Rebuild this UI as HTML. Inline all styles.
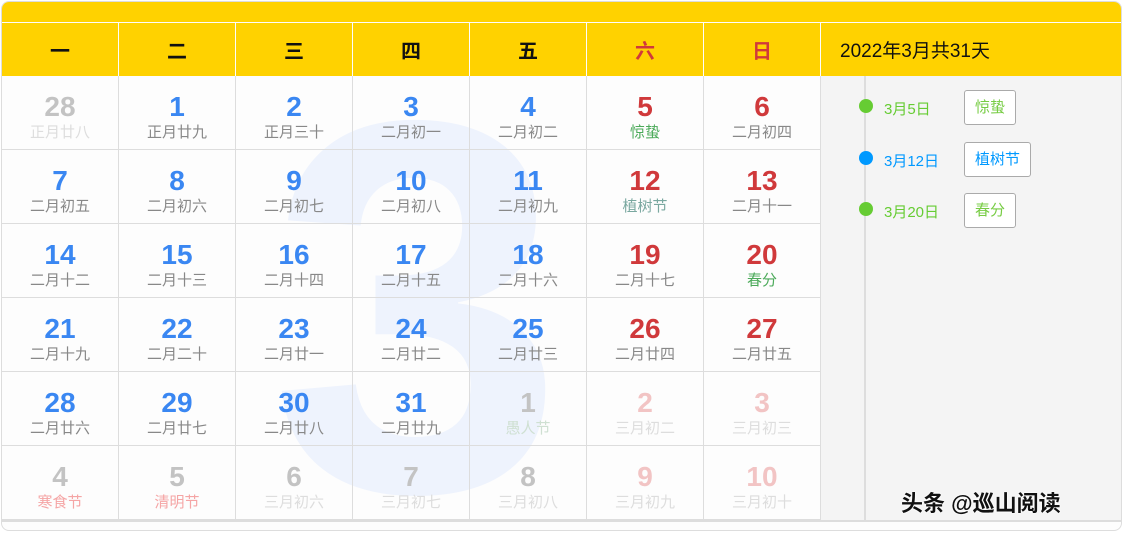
<!DOCTYPE html><html><head><meta charset="utf-8"><style>
*{margin:0;padding:0;box-sizing:border-box}
html,body{width:1123px;height:533px;overflow:hidden}
body{background:#fff;font-family:"Liberation Sans","Noto Sans CJK SC",sans-serif;position:relative}
.box{position:absolute;left:1px;top:1px;width:1121px;height:530px;border:1px solid #ddd;border-radius:8px;overflow:hidden;background:#fdfdfd}
.top{position:absolute;left:0;top:0;width:100%;height:20px;background:#ffd200}
.hd{position:absolute;top:21px;height:53px;background:#ffd200;font-size:20px;font-weight:bold;display:flex;align-items:center;justify-content:center;color:#111}
.cell{position:absolute;width:117px;height:74px;border-right:1px solid #ddd;border-bottom:1px solid #ddd;text-align:center;background:transparent}
.n{position:absolute;top:15px;left:0;width:100%;font-size:28px;font-weight:bold;line-height:32px}
.l{position:absolute;top:48px;left:0;width:100%;font-size:15px;line-height:18px;color:#888}
.b{color:#3a87f2}.r{color:#d0393b}.g{color:#c3c3c3}.p{color:#f2c4c4}
.fl{color:#ddd}
.side{position:absolute;left:819px;top:74px;width:301px;height:445px;background:#f4f4f4}
.item{position:absolute;left:63px;font-size:15px}
.dot{position:absolute;left:38px;width:14px;height:14px;border-radius:50%}
.tag{position:absolute;left:143px;height:35px;border:1px solid #aaa;border-radius:3px;background:#fff;font-size:15px;line-height:33px;padding:0 10px}
</style></head><body>
<div class="box">
<div class="top"></div>
<svg style="position:absolute;left:0;top:0" width="1119" height="519"><text x="415" y="488" text-anchor="middle" font-family="Liberation Sans" font-weight="bold" font-size="530" fill="#eef3fd">3</text></svg>
<div class="hd" style="left:0;width:116px">一</div>
<div class="hd" style="left:117px;width:116px">二</div>
<div class="hd" style="left:234px;width:116px">三</div>
<div class="hd" style="left:351px;width:116px">四</div>
<div class="hd" style="left:468px;width:116px">五</div>
<div class="hd" style="left:585px;width:116px;color:#d0393b">六</div>
<div class="hd" style="left:702px;width:116px;color:#d0393b">日</div>
<div class="hd" style="left:819px;width:302px;justify-content:flex-start;padding-left:19px;font-weight:normal;font-size:19px">2022年3月共31天</div>

<div class="cell" style="left:0;top:74px"><div class="n g">28</div><div class="l fl">正月廿八</div></div>
<div class="cell" style="left:117px;top:74px"><div class="n b">1</div><div class="l">正月廿九</div></div>
<div class="cell" style="left:234px;top:74px"><div class="n b">2</div><div class="l">正月三十</div></div>
<div class="cell" style="left:351px;top:74px"><div class="n b">3</div><div class="l">二月初一</div></div>
<div class="cell" style="left:468px;top:74px"><div class="n b">4</div><div class="l">二月初二</div></div>
<div class="cell" style="left:585px;top:74px"><div class="n r">5</div><div class="l" style="color:#4caa5a">惊蛰</div></div>
<div class="cell" style="left:702px;top:74px"><div class="n r">6</div><div class="l">二月初四</div></div>

<div class="cell" style="left:0;top:148px"><div class="n b">7</div><div class="l">二月初五</div></div>
<div class="cell" style="left:117px;top:148px"><div class="n b">8</div><div class="l">二月初六</div></div>
<div class="cell" style="left:234px;top:148px"><div class="n b">9</div><div class="l">二月初七</div></div>
<div class="cell" style="left:351px;top:148px"><div class="n b">10</div><div class="l">二月初八</div></div>
<div class="cell" style="left:468px;top:148px"><div class="n b">11</div><div class="l">二月初九</div></div>
<div class="cell" style="left:585px;top:148px"><div class="n r">12</div><div class="l" style="color:#7aa8a0">植树节</div></div>
<div class="cell" style="left:702px;top:148px"><div class="n r">13</div><div class="l">二月十一</div></div>

<div class="cell" style="left:0;top:222px"><div class="n b">14</div><div class="l">二月十二</div></div>
<div class="cell" style="left:117px;top:222px"><div class="n b">15</div><div class="l">二月十三</div></div>
<div class="cell" style="left:234px;top:222px"><div class="n b">16</div><div class="l">二月十四</div></div>
<div class="cell" style="left:351px;top:222px"><div class="n b">17</div><div class="l">二月十五</div></div>
<div class="cell" style="left:468px;top:222px"><div class="n b">18</div><div class="l">二月十六</div></div>
<div class="cell" style="left:585px;top:222px"><div class="n r">19</div><div class="l">二月十七</div></div>
<div class="cell" style="left:702px;top:222px"><div class="n r">20</div><div class="l" style="color:#4caa5a">春分</div></div>

<div class="cell" style="left:0;top:296px"><div class="n b">21</div><div class="l">二月十九</div></div>
<div class="cell" style="left:117px;top:296px"><div class="n b">22</div><div class="l">二月二十</div></div>
<div class="cell" style="left:234px;top:296px"><div class="n b">23</div><div class="l">二月廿一</div></div>
<div class="cell" style="left:351px;top:296px"><div class="n b">24</div><div class="l">二月廿二</div></div>
<div class="cell" style="left:468px;top:296px"><div class="n b">25</div><div class="l">二月廿三</div></div>
<div class="cell" style="left:585px;top:296px"><div class="n r">26</div><div class="l">二月廿四</div></div>
<div class="cell" style="left:702px;top:296px"><div class="n r">27</div><div class="l">二月廿五</div></div>

<div class="cell" style="left:0;top:370px"><div class="n b">28</div><div class="l">二月廿六</div></div>
<div class="cell" style="left:117px;top:370px"><div class="n b">29</div><div class="l">二月廿七</div></div>
<div class="cell" style="left:234px;top:370px"><div class="n b">30</div><div class="l">二月廿八</div></div>
<div class="cell" style="left:351px;top:370px"><div class="n b">31</div><div class="l">二月廿九</div></div>
<div class="cell" style="left:468px;top:370px"><div class="n g">1</div><div class="l" style="color:#cfe0d2">愚人节</div></div>
<div class="cell" style="left:585px;top:370px"><div class="n p">2</div><div class="l fl">三月初二</div></div>
<div class="cell" style="left:702px;top:370px"><div class="n p">3</div><div class="l fl">三月初三</div></div>

<div class="cell" style="left:0;top:444px"><div class="n g">4</div><div class="l" style="color:#f5a5a5">寒食节</div></div>
<div class="cell" style="left:117px;top:444px"><div class="n g">5</div><div class="l" style="color:#f5a5a5">清明节</div></div>
<div class="cell" style="left:234px;top:444px"><div class="n g">6</div><div class="l fl">三月初六</div></div>
<div class="cell" style="left:351px;top:444px"><div class="n g">7</div><div class="l fl">三月初七</div></div>
<div class="cell" style="left:468px;top:444px"><div class="n g">8</div><div class="l fl">三月初八</div></div>
<div class="cell" style="left:585px;top:444px"><div class="n p">9</div><div class="l fl">三月初九</div></div>
<div class="cell" style="left:702px;top:444px"><div class="n p">10</div><div class="l fl">三月初十</div></div>

<div class="side">
<div style="position:absolute;left:43px;top:0;width:2px;height:445px;background:#ddd"></div>
<div class="dot" style="top:23px;background:#6c3"></div><div class="item" style="top:22px;color:#6c3">3月5日</div><div class="tag" style="top:14px;color:#7c4">惊蛰</div>
<div class="dot" style="top:75px;background:#09f"></div><div class="item" style="top:74px;color:#09f">3月12日</div><div class="tag" style="top:66px;color:#09f">植树节</div>
<div class="dot" style="top:126px;background:#6c3"></div><div class="item" style="top:125px;color:#6c3">3月20日</div><div class="tag" style="top:117px;color:#7c4">春分</div>
<div style="position:absolute;left:80px;top:410px;font-size:22px;font-weight:bold;color:#111;text-shadow:0 0 2px #fff,0 0 2px #fff">头条 @巡山阅读</div>
</div>
<div style="position:absolute;left:0;top:518px;width:1121px;height:2px;background:#ddd"></div>
</div>
</body></html>
